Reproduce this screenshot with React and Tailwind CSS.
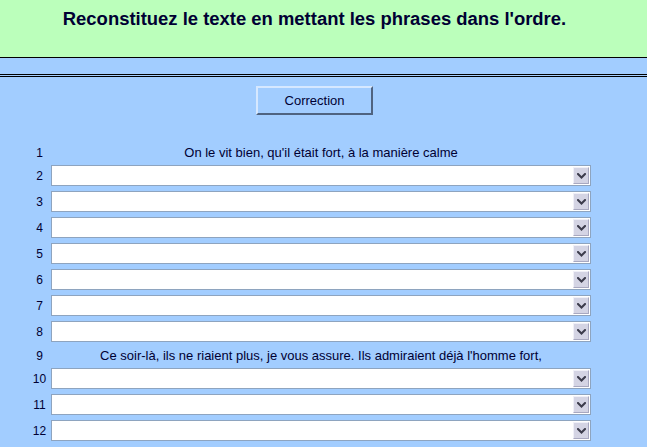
import React from "react";

const Chevron = () => (
  <svg width="9" height="6" viewBox="0 0 9 6" className="block">
    <path d="M1 1 L4.5 4.5 L8 1" fill="none" stroke="#3c3c4c" strokeWidth="2" strokeLinecap="square" />
  </svg>
);

const SelectBox = () => (
  <div className="mt-[2px] flex h-[21px] w-[540px] border border-[#8ea4bf] bg-white">
    <div className="flex-1" />
    <div className="m-[1px] flex w-[16px] items-center justify-center border border-t-[#f0f0f8] border-l-[#f0f0f8] border-b-[#a8a8c0] border-r-[#a8a8c0] bg-[#d4d4e4]">
      <Chevron />
    </div>
  </div>
);

const rows = [
  { n: 1, text: "On le vit bien, qu'il était fort, à la manière calme" },
  { n: 2 }, { n: 3 }, { n: 4 }, { n: 5 }, { n: 6 }, { n: 7 }, { n: 8 },
  { n: 9, text: "Ce soir-là, ils ne riaient plus, je vous assure. Ils admiraient déjà l'homme fort," },
  { n: 10 }, { n: 11 }, { n: 12 },
];

export default function App() {
  return (
    <div className="min-h-[447px] w-[647px] overflow-hidden bg-[#a2cdff] text-[#000033]" style={{ fontFamily: '"Liberation Sans", Arial, sans-serif' }}>
      <div className="h-[58px] border-b border-black bg-[#bbffbb]">
        <h1 className="w-[629px] pt-[8px] text-center text-[18.45px] font-bold leading-[22px]">
          Reconstituez le texte en mettant les phrases dans l'ordre.
        </h1>
      </div>
      <div className="mt-[16px] h-[3px] border-y border-black bg-[#a2cdff]" />
      <div className="flex w-[629px] justify-center pt-[9px]">
        <button className="h-[29px] w-[117px] border-2 border-t-[#d6e8ff] border-l-[#d6e8ff] border-b-[#4f6380] border-r-[#4f6380] bg-[#a2cdff] text-[13px] text-[#000033]">
          Correction
        </button>
      </div>
      <div className="mt-[27px] flex flex-col pl-[28px]">
        {rows.map((r) =>
          r.text ? (
            <div key={r.n} className="flex h-[21px] items-center text-[12px]">
              <div className="w-[23px] text-center">{r.n}</div>
              <div className="w-[540px] text-center text-[13px]">{r.text}</div>
            </div>
          ) : (
            <div key={r.n} className="flex h-[26px] items-start text-[12px]">
              <div className="flex h-[25px] w-[23px] items-center justify-center">{r.n}</div>
              <SelectBox />
            </div>
          )
        )}
      </div>
    </div>
  );
}
